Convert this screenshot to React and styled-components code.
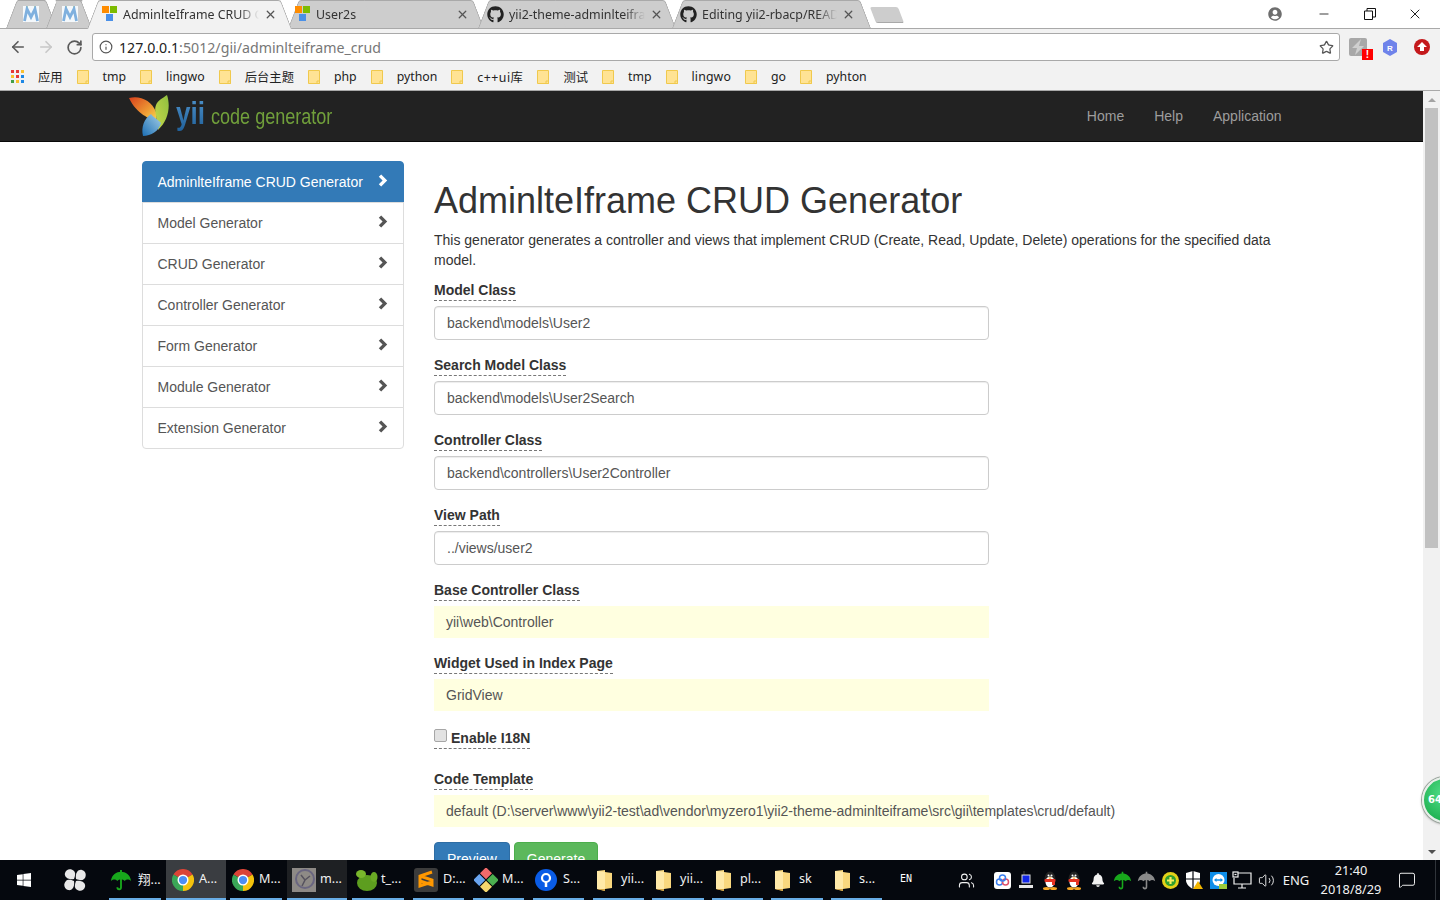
import styled, { createGlobalStyle } from 'styled-components'
import { ArrowLeft, ArrowRight, RotateCw, Info, Star, Minus, X, Users, Volume2, MessageSquare } from 'lucide-react'
import { FaGithub, FaWindows, FaUserCircle, FaBell } from 'react-icons/fa'

const Global = createGlobalStyle`
  html, body { margin: 0; height: 100%; overflow: hidden; background: #fff; }
  body { font-family: "Liberation Sans", Arial, sans-serif; font-size: 14px; color: #333; }
  * { box-sizing: border-box; }
`

const UI_FONT = '"Noto Sans", "Noto Sans CJK SC", sans-serif'

const Screen = styled.div`
  width: 1440px;
  height: 900px;
  display: flex;
  flex-direction: column;
  overflow: hidden;
`

/* browser chrome */
const TabStrip = styled.div`
  height: 29px;
  flex: none;
  display: flex;
  background: #fff;
  box-shadow: inset 0 -1px 0 #a9a9a9;
  font-family: ${UI_FONT};
  font-size: 12.4px;
`
const Tab = styled.div`
  position: relative;
  flex: none;
  width: ${p => p.$w}px;
  margin-left: ${p => p.$ml || 0}px;
  height: ${p => (p.$active ? 29 : 28)}px;
  z-index: ${p => (p.$active ? 3 : 1)};
  display: flex;
  align-items: center;
  gap: 5px;
  padding: 0 ${p => p.$pr || 16}px ${p => (p.$active ? 1 : 0)}px ${p => p.$pl || 16}px;
  color: #333;
  &::before, &::after {
    content: '';
    position: absolute;
    top: 0;
    bottom: 0;
    width: 55%;
    background: ${p => (p.$active ? '#f2f2f2' : '#cdcdcd')};
    border-top: 1px solid #a9a9a9;
    z-index: -1;
  }
  &::before {
    left: 0;
    border-left: 1px solid #a9a9a9;
    border-top-left-radius: 3px;
    transform-origin: bottom left;
    transform: skewX(-21deg);
  }
  &::after {
    right: 0;
    border-right: 1px solid #a9a9a9;
    border-top-right-radius: 3px;
    transform-origin: bottom right;
    transform: skewX(21deg);
  }
`
const TabTitle = styled.span`
  flex: 1;
  min-width: 0;
  white-space: nowrap;
  overflow: hidden;
  -webkit-mask-image: linear-gradient(to right, #000 85%, transparent 100%);
  mask-image: linear-gradient(to right, #000 85%, transparent 100%);
`
const NewTab = styled.div`
  width: 28px;
  height: 16px;
  margin: 7px 0 0 2px;
  background: #cdcdcd;
  border-bottom: 1px solid #a9a9a9;
  border-radius: 2px;
  transform: skewX(21deg);
`
const WindowControls = styled.div`
  margin-left: auto;
  display: flex;
  align-items: center;
  height: 28px;
  padding-right: 2px;
  color: #111;
`
const ProfileIcon = styled.span`
  display: flex;
  color: #6e6e6e;
  margin-right: 20px;
`
const WinBtn = styled.span`
  width: 45.5px;
  display: flex;
  justify-content: center;
`
const Toolbar = styled.div`
  height: 33px;
  flex: none;
  display: flex;
  align-items: flex-start;
  background: #f2f2f2;
  padding: 4px 0 0 4px;
`
const NavBtn = styled.span`
  width: 28px;
  height: 28px;
  display: flex;
  align-items: center;
  justify-content: center;
  color: ${p => (p.$off ? '#c8c8c8' : '#5a5a5a')};
`
const AddressBar = styled.div`
  width: 1248px;
  height: 28px;
  margin-left: 4px;
  background: #fff;
  border: 1px solid #a9a9a9;
  border-radius: 3px;
  display: flex;
  align-items: center;
  padding: 0 5px 0 6px;
  font-family: ${UI_FONT};
  font-size: 14.2px;
  color: #777;
  gap: 6px;
`
const Host = styled.span`
  color: #222;
`
const UrlText = styled.span`
  flex: 1;
`
const ExtIcons = styled.div`
  display: flex;
  align-items: center;
  height: 28px;
  padding-left: 8px;
  gap: 12px;
`
const ExtSlot = styled.span`
  position: relative;
  width: 20px;
  height: 20px;
  display: flex;
  align-items: center;
  justify-content: center;
`
const Alert = styled.span`
  position: absolute;
  right: -5px;
  bottom: -3px;
  width: 11px;
  height: 11px;
  background: #f00;
  color: #fff;
  font: bold 10px/11px "Liberation Sans", sans-serif;
  text-align: center;
`
const Bookmarks = styled.div`
  height: 29px;
  flex: none;
  display: flex;
  align-items: center;
  gap: 14px;
  padding: 1px 0 0 11px;
  background: #f2f2f2;
  border-bottom: 1px solid #a9a9a9;
  font-family: ${UI_FONT};
  font-size: 12.3px;
  color: #222;
`
const BookLabel = styled.span`
  letter-spacing: ${p => p.$spacing || 0}px;
`

/* page */
const Viewport = styled.div`
  position: relative;
  flex: 1;
  min-height: 0;
  display: flex;
`
const Page = styled.div`
  flex: 1;
  min-width: 0;
  overflow: hidden;
`
const Navbar = styled.nav`
  height: 51px;
  background: #222;
  border-bottom: 1px solid #080808;
`
const NavInner = styled.div`
  width: 1170px;
  height: 50px;
  margin: 0 auto;
  padding: 0 15px 0 2px;
  display: flex;
  align-items: center;
  justify-content: space-between;
`
const Brand = styled.div`
  display: flex;
  align-items: center;
  gap: 7px;
`
const BrandText = styled.div`
  display: flex;
  align-items: baseline;
  font-family: "Liberation Sans", sans-serif;
  margin-top: -5px;
`
const Yii = styled.span`
  display: inline-block;
  width: 35px;
  font-size: 31px;
  line-height: 36px;
  font-weight: 700;
  transform: scaleX(0.84);
  transform-origin: left center;
  background: linear-gradient(#4f94cd, #1f5f99);
  -webkit-background-clip: text;
  background-clip: text;
  color: transparent;
`
const CodeGen = styled.span`
  display: inline-block;
  width: 121px;
  white-space: nowrap;
  font-size: 22px;
  transform: scaleX(0.82);
  transform-origin: left center;
  color: #71a03b;
`
const NavLinks = styled.div`
  display: flex;
  gap: 30px;
  color: #9d9d9d;
`
const Container = styled.div`
  width: 1170px;
  margin: 0 auto;
  padding: 19px 15px 0;
  display: flex;
  gap: 30px;
  align-items: flex-start;
`
const SideList = styled.div`
  width: 262.5px;
  flex: none;
`
const SideItem = styled.div`
  height: 42px;
  margin-bottom: -1px;
  padding: 0 15px;
  display: flex;
  align-items: center;
  justify-content: space-between;
  background: ${p => (p.$active ? '#337ab7' : '#fff')};
  border: 1px solid ${p => (p.$active ? '#337ab7' : '#ddd')};
  color: ${p => (p.$active ? '#fff' : '#555')};
  position: relative;
  &:first-child { border-radius: 4px 4px 0 0; }
  &:last-child { border-radius: 0 0 4px 4px; }
  svg { margin-top: -3px; }
`
const Main = styled.div`
  flex: 1;
  min-width: 0;
`
const Title = styled.h1`
  margin: 20px 0 9px;
  font-size: 36px;
  line-height: 39.6px;
  font-weight: 500;
  color: #333;
`
const Lead = styled.p`
  margin: 0 0 10px;
  line-height: 20px;
`
const Form = styled.div`
  width: 555px;
`
const Group = styled.div`
  margin-bottom: 15px;
`
const FieldLabel = styled.label`
  display: block;
  width: fit-content;
  margin-bottom: 5px;
  font-weight: 700;
  line-height: 20px;
  border-bottom: 1px dashed #777;
  color: #333;
`
const TextInput = styled.div`
  height: 34px;
  padding: 0 12px;
  display: flex;
  align-items: center;
  background: #fff;
  border: 1px solid #ccc;
  border-radius: 4px;
  box-shadow: inset 0 1px 1px rgba(0, 0, 0, 0.075);
  color: #555;
`
const Sticky = styled.div`
  height: 32px;
  padding: 0 12px;
  display: flex;
  align-items: center;
  background: #ffffe0;
  color: #555;
  white-space: nowrap;
`
const CheckGroup = styled.div`
  padding: 2px 0 5px;
  margin-bottom: 15px;
`
const CheckLabel = styled(FieldLabel)`
  display: flex;
  align-items: center;
  gap: 4px;
  margin-bottom: 0;
`
const Check = styled.input`
  appearance: none;
  width: 13px;
  height: 13px;
  margin: -5px 0 0;
  background: #e2e2e2;
  border: 1px solid #a6a6a6;
  border-radius: 2px;
`
const Buttons = styled.div`
  display: flex;
  gap: 4px;
`
const Btn = styled.button`
  height: 34px;
  padding: 6px 12px;
  font: 14px/20px "Liberation Sans", Arial, sans-serif;
  color: #fff;
  background: ${p => (p.$green ? '#5cb85c' : '#337ab7')};
  border: 1px solid ${p => (p.$green ? '#4cae4c' : '#2e6da4')};
  border-radius: 4px;
`

/* scrollbar + floating ball */
const Scrollbar = styled.div`
  width: 17px;
  flex: none;
  display: flex;
  flex-direction: column;
  align-items: center;
  background: #f1f1f1;
`
const ScrollArrow = styled.div`
  height: 17px;
  flex: none;
  display: flex;
  align-items: center;
  justify-content: center;
  &::before {
    content: '';
    border-left: 4px solid transparent;
    border-right: 4px solid transparent;
    ${p => (p.$down ? 'border-top: 4px solid #505050;' : 'border-bottom: 4px solid #a3a3a3;')}
  }
`
const ScrollThumb = styled.div`
  width: 13px;
  height: 440px;
  background: #c1c1c1;
`
const ScrollGap = styled.div`
  flex: 1;
`
const SpeedBall = styled.div`
  position: absolute;
  left: 1422px;
  top: 686px;
  width: 46px;
  height: 46px;
  border-radius: 50%;
  background: radial-gradient(circle at 50% 35%, #55e08a, #22b455 75%);
  border: 2px solid #e7efe9;
  box-shadow: 0 0 0 1px #9aa59d, 0 1px 3px rgba(0, 0, 0, 0.4);
  color: #fff;
  font: bold 10px/42px "DejaVu Sans", sans-serif;
  padding-left: 4px;
`

/* taskbar */
const Taskbar = styled.div`
  height: 40px;
  flex: none;
  display: flex;
  align-items: stretch;
  background: #05080e;
  color: #f2f2f2;
  font-family: ${UI_FONT};
  font-size: 12.6px;
`
const TaskSlot = styled.div`
  width: 48px;
  padding-left: ${p => p.$shift || 0}px;
  margin-right: ${p => p.$mr || 0}px;
  display: flex;
  align-items: center;
  justify-content: center;
`
const TaskItem = styled.div`
  position: relative;
  flex: none;
  width: ${p => p.$w}px;
  margin-left: ${p => p.$ml}px;
  padding-left: ${p => p.$pl}px;
  display: flex;
  align-items: center;
  gap: ${p => p.$gap}px;
  white-space: nowrap;
  background: ${p => p.$bg || 'transparent'};
  &::after {
    content: '';
    position: absolute;
    left: 0;
    right: 0;
    bottom: 0;
    height: 2px;
    background: #68ade6;
  }
`
const TaskText = styled.span`
  margin-top: -3px;
`
const ImeLabel = styled.div`
  margin-left: 18px;
  display: flex;
  align-items: center;
  padding-bottom: 3px;
  font: 10px "DejaVu Sans Mono", monospace;
  color: #fff;
`
const Tray = styled.div`
  margin-left: auto;
  display: flex;
  align-items: center;
`
const TrayIcon = styled.span`
  width: 24px;
  display: flex;
  justify-content: center;
  margin-right: ${p => p.$mr || 0}px;
  color: #f2f2f2;
`
const Ime = styled.span`
  width: 36px;
  text-align: center;
  font-size: 13px;
`
const Clock = styled.div`
  width: 74px;
  text-align: center;
  line-height: 19px;
  font-size: 12.8px;
`
const NotifyBtn = styled.span`
  width: 38px;
  display: flex;
  justify-content: center;
`
const ShowDesktop = styled.span`
  align-self: stretch;
  width: 1px;
  margin: 0 4px 0 9px;
  background: #30343a;
`

/* drawn icons */
const MFav = () => (
  <svg width="16" height="16" viewBox="0 0 16 16" style={{ flex: 'none' }}>
    <rect width="16" height="16" fill="#f4f8fb" />
    <path d="M4 0v3M12 0v3" stroke="#9cc88a" strokeWidth="1.5" />
    <path d="M1.500 15 4 3l4 8 4-8 2.500 12" fill="none" stroke="#7fb0de" strokeWidth="2.800" />
  </svg>
)
const WinFav = () => (
  <svg width="16" height="16" viewBox="0 0 16 16" style={{ flex: 'none' }}>
    <rect width="7" height="7" fill="#ff8c00" />
    <rect x="8" width="7" height="7" fill="#7cbb00" />
    <rect y="8" x="4" width="7" height="7" fill="#4a90e8" />
  </svg>
)
const AppsGrid = () => (
  <svg width="13" height="13" viewBox="0 0 13 13">
    {['#e53935', '#e53935', '#fbc02d', '#fbc02d', '#e53935', '#1e88e5', '#43a047', '#fbc02d', '#1e88e5'].map((c, i) => (
      <rect key={i} x={(i % 3) * 5} y={Math.floor(i / 3) * 5} width="3" height="3" fill={c} />
    ))}
  </svg>
)
const BookFolder = () => (
  <svg width="12" height="14" viewBox="0 0 12 14">
    <path d="M.5.5h11v13H.5z" fill="#ffe394" stroke="#f0c94d" />
    <path d="M9 11h2.500v2.500H9z" fill="#ffe394" stroke="#f0c94d" />
  </svg>
)
const Chrome = ({ size = 22 }) => (
  <svg width={size} height={size} viewBox="0 0 24 24" style={{ flex: 'none' }}>
    <path d="M12 12 1.600 6A12 12 0 0 1 22.400 6Z" fill="#db4437" />
    <path d="M12 12 22.400 6A12 12 0 0 1 12 24Z" fill="#f4c20d" />
    <path d="M12 12V24A12 12 0 0 1 1.600 6Z" fill="#3aa757" />
    <circle cx="12" cy="12" r="6" fill="#fff" />
    <circle cx="12" cy="12" r="4.500" fill="#4d8ef5" />
  </svg>
)
const Umbrella = ({ color = '#18a81c', size = 22 }) => (
  <svg width={size} height={size} viewBox="0 0 24 24" style={{ flex: 'none' }}>
    <path d="M1 13C2 6 7 3 12 3s10 3 11 10c-3-2-5-2-7 0-2-2-6-2-8 0-2-2-4-2-7 0Z" fill={color} />
    <path d="M12 1v19c0 3-4 3-4 0" fill="none" stroke={color} strokeWidth="2" />
  </svg>
)
const Fan = () => (
  <svg width="22" height="22" viewBox="0 0 22 22">
    <g fill="#e8e8e8">
      <path d="M10 10C4 11 0 8 1 4s6-5 9-2c2 2 1 5 0 8Z" />
      <path d="M12 10c-1-6 2-10 6-9s5 6 2 9c-2 2-5 1-8 0Z" />
      <path d="M12 12c6-1 10 2 9 6s-6 5-9 2c-2-2-1-5 0-8Z" />
      <path d="M10 12c1 6-2 10-6 9s-5-6-2-9c2-2 5-1 8 0Z" />
    </g>
  </svg>
)
const Leaf = () => (
  <svg width="24" height="24" viewBox="0 0 24 24" style={{ flex: 'none' }}>
    <ellipse cx="13" cy="15" rx="10" ry="8" fill="#5d9e1f" />
    <ellipse cx="7" cy="6" rx="5" ry="4" fill="#79b72c" />
    <ellipse cx="20" cy="9" rx="3.500" ry="5" fill="#6aa924" />
  </svg>
)
const StoneThumb = () => (
  <svg width="24" height="24" viewBox="0 0 24 24" style={{ flex: 'none' }}>
    <rect width="24" height="24" fill="#8e8a86" />
    <circle cx="13" cy="11" r="9" fill="none" stroke="#6a6680" strokeWidth="2" />
    <path d="M9 7l4 5-3 6M13 12l5-4" fill="none" stroke="#56525e" strokeWidth="1.500" />
  </svg>
)
const Sublime = () => (
  <svg width="24" height="24" viewBox="0 0 24 24" style={{ flex: 'none' }}>
    <rect width="24" height="24" rx="3" fill="#3c3c3c" />
    <path d="M18 4 6 8v5l12 4v-5L6 8M6 13v5l12-4" fill="none" stroke="#ff9800" strokeWidth="3" />
  </svg>
)
const Diamond = () => (
  <svg width="24" height="24" viewBox="0 0 24 24" style={{ flex: 'none' }}>
    <g transform="rotate(45 12 12)">
      <rect x="3" y="3" width="8.500" height="8.500" fill="#f06a6a" />
      <rect x="12.500" y="3" width="8.500" height="8.500" fill="#4caf50" />
      <rect x="3" y="12.500" width="8.500" height="8.500" fill="#6aa5f0" />
      <rect x="12.500" y="12.500" width="8.500" height="8.500" fill="#f5d76e" />
    </g>
  </svg>
)
const SourceTree = () => (
  <svg width="22" height="22" viewBox="0 0 22 22" style={{ flex: 'none' }}>
    <circle cx="11" cy="11" r="11" fill="#0a5ce6" />
    <circle cx="11" cy="9" r="4" fill="none" stroke="#fff" strokeWidth="2.200" />
    <path d="M11 12v6" stroke="#fff" strokeWidth="2.500" />
  </svg>
)
const TaskFolder = () => (
  <svg width="15" height="21" viewBox="0 0 15 21" style={{ flex: 'none' }}>
    <path d="M0 1 8 0v2l7 1v15l-7 1v2l-8-2Z" fill="#f9d77e" />
    <path d="M8 2v17L0 19V1Z" fill="#ffe9a8" />
    <path d="M0 19l8 2v-2Z" fill="#d0a040" />
  </svg>
)
const BaiduCloud = () => (
  <svg width="17" height="17" viewBox="0 0 17 17">
    <rect width="17" height="17" rx="3" fill="#fff" />
    <circle cx="5.500" cy="10" r="3" fill="none" stroke="#3b7ff0" strokeWidth="1.500" />
    <circle cx="11.500" cy="10" r="3" fill="none" stroke="#e0506a" strokeWidth="1.500" />
    <circle cx="8.500" cy="6" r="3" fill="none" stroke="#3b7ff0" strokeWidth="1.500" />
  </svg>
)
const PcAgent = () => (
  <svg width="16" height="18" viewBox="0 0 16 18">
    <rect x="5" y="0" width="2" height="4" fill="#222" />
    <rect x="4" y="4" width="8" height="8" fill="#1226e8" stroke="#ddd" />
    <rect x="1" y="14" width="14" height="3" fill="#e8e8e8" />
  </svg>
)
const Penguin = () => (
  <svg width="16" height="19" viewBox="0 0 16 19">
    <ellipse cx="8" cy="8" rx="5.500" ry="7.500" fill="#222" />
    <ellipse cx="8" cy="11" rx="4.500" ry="5.500" fill="#fff" />
    <rect x="2.500" y="8" width="11" height="3" rx="1" fill="#e53323" />
    <path d="M10 10h3v4h-3z" fill="#e53323" />
    <ellipse cx="4.500" cy="17.500" rx="3.500" ry="1.500" fill="#f5a623" />
    <ellipse cx="11.500" cy="17.500" rx="3.500" ry="1.500" fill="#f5a623" />
    <circle cx="6.500" cy="4.500" r="1" fill="#fff" />
    <circle cx="9.500" cy="4.500" r="1" fill="#fff" />
    <path d="M6 6.500h4L8 8Z" fill="#f5a623" />
  </svg>
)
const PlusBall = () => (
  <svg width="17" height="17" viewBox="0 0 17 17">
    <circle cx="8.500" cy="8.500" r="8.500" fill="#e3d119" />
    <circle cx="8.500" cy="8.500" r="5.500" fill="#2f9e2f" />
    <path d="M8.500 5v7M5 8.500h7" stroke="#f4ee5c" strokeWidth="2.200" />
  </svg>
)
const Shield = () => (
  <svg width="18" height="18" viewBox="0 0 18 18">
    <path d="M8 0 15 2v7c0 4-3 7-7 9-4-2-7-5-7-9V2Z" fill="#fff" />
    <path d="M8 0v18M1 8h14" stroke="#05080e" strokeWidth="1.200" />
    <path d="M13 10l5 8H8Z" fill="#f2b600" />
  </svg>
)
const TeamViewer = () => (
  <svg width="17" height="17" viewBox="0 0 17 17">
    <rect width="17" height="17" fill="#0e8ee9" />
    <circle cx="8.500" cy="8" r="6" fill="#fff" />
    <path d="M4 8l2.500-2v1.200h4V6L13 8l-2.500 2V8.800h-4V10Z" fill="#0e8ee9" />
    <rect x="9" y="12" width="8" height="5" fill="#9ccc3c" />
  </svg>
)
const NetPc = () => (
  <svg width="20" height="18" viewBox="0 0 20 18" fill="none" stroke="#f2f2f2" strokeWidth="1.200">
    <path d="M5 2h14v11H2V7M10 13v4M6 17h8" />
    <rect x="1" y="1" width="5" height="5" fill="#05080e" />
    <path d="M2.500 3.500h2" />
  </svg>
)
const Hex = () => (
  <svg width="16" height="17" viewBox="0 0 16 17">
    <path d="M8 0 15 4v9l-7 4-7-4V4Z" fill="#6f83ea" />
    <text x="8" y="11.500" textAnchor="middle" fontSize="8" fontWeight="700" fontFamily="Liberation Sans" fill="#fff">R</text>
  </svg>
)
const UpCircle = () => (
  <svg width="16" height="16" viewBox="0 0 16 16">
    <circle cx="8" cy="8" r="8" fill="#c4191c" />
    <path d="M8 3l5 5h-3v4H6V8H3Z" fill="#fff" />
  </svg>
)
const Bolt = () => (
  <svg width="18" height="18" viewBox="0 0 18 18">
    <rect width="18" height="18" rx="2" fill="#a8a8a8" />
    <path d="M12 1 3 10h5l-2 7 9-9h-5Z" fill="#cfcfcf" />
  </svg>
)
const RestoreIcon = () => (
  <svg width="12" height="12" viewBox="0 0 12 12" fill="none" stroke="#111" strokeWidth="1">
    <path d="M.5 3h8v8.500h-8zM3 3V.500h8.500V9H8.500" />
  </svg>
)
const Chevron = ({ color }) => (
  <svg width="10" height="13" viewBox="0 0 10 13">
    <path d="M3.200.500 9.200 6.500 3.200 12.500 .8 10.300 4.600 6.500 .8 2.700Z" fill={color} />
  </svg>
)
const YiiMark = () => (
  <svg width="40" height="42" viewBox="0 0 40 42">
    <defs>
      <linearGradient id="wingL" x1="0" y1="0" x2="1" y2="1">
        <stop offset="0" stopColor="#d8401c" />
        <stop offset="0.6" stopColor="#ee9a34" />
        <stop offset="1" stopColor="#f7de50" />
      </linearGradient>
      <linearGradient id="wingR" x1="1" y1="0" x2="0" y2="1">
        <stop offset="0" stopColor="#8fbf3f" />
        <stop offset="1" stopColor="#c8d84a" />
      </linearGradient>
      <linearGradient id="wingB" x1="0" y1="1" x2="1" y2="0">
        <stop offset="0" stopColor="#1c6fb5" />
        <stop offset="1" stopColor="#a5cfe6" />
      </linearGradient>
    </defs>
    <path d="M0 3C10 0 23 5 27 17c1 4 1 7 0 10C21 23 8 20 0 3Z" fill="url(#wingL)" />
    <path d="M38 0c4 12 1 26-9 35 1-10-5-18-2-25 2-5 7-7 11-10Z" fill="url(#wingR)" />
    <path d="M14 41C12 32 15 24 22 19c3 4 8 6 10 9-2 8-10 13-18 13Z" fill="url(#wingB)" />
  </svg>
)

const bookmarks = [
  { name: 'tmp' },
  { name: 'lingwo' },
  { name: '后台主题' },
  { name: 'php' },
  { name: 'python' },
  { name: 'c++ui库', spacing: 0.5 },
  { name: '测试' },
  { name: 'tmp' },
  { name: 'lingwo', spacing: 0.15 },
  { name: 'go' },
  { name: 'pyhton' },
]
const generators = ['Model Generator', 'CRUD Generator', 'Controller Generator', 'Form Generator', 'Module Generator', 'Extension Generator']
const textFields = [
  ['Model Class', 'backend\\models\\User2'],
  ['Search Model Class', 'backend\\models\\User2Search'],
  ['Controller Class', 'backend\\controllers\\User2Controller'],
  ['View Path', '../views/user2'],
]
const taskItems = [
  { w: 52, ml: 0, pl: 1, gap: 6, icon: <Umbrella />, text: '翔...' },
  { w: 60, ml: 5, pl: 6, gap: 5, icon: <Chrome />, text: 'A...', bg: '#3a3d41' },
  { w: 52, ml: 4, pl: 2, gap: 5, icon: <Chrome />, text: 'M...' },
  { w: 60, ml: 5, pl: 5, gap: 4, icon: <StoneThumb />, text: 'm...', bg: '#1e2023' },
  { w: 52, ml: 5, pl: 2, gap: 3, icon: <Leaf />, text: 't_...' },
  { w: 51, ml: 9, pl: 1, gap: 5, icon: <Sublime />, text: 'D:...' },
  { w: 51, ml: 9, pl: 1, gap: 4, icon: <Diamond />, text: 'M...' },
  { w: 51, ml: 9, pl: 2, gap: 6, icon: <SourceTree />, text: 'S...' },
  { w: 51, ml: 9, pl: 4, gap: 9, icon: <TaskFolder />, text: 'yii...' },
  { w: 52, ml: 8, pl: 4, gap: 9, icon: <TaskFolder />, text: 'yii...' },
  { w: 51, ml: 8, pl: 4, gap: 9, icon: <TaskFolder />, text: 'pl...' },
  { w: 52, ml: 8, pl: 4, gap: 9, icon: <TaskFolder />, text: 'sk' },
  { w: 51, ml: 8, pl: 4, gap: 9, icon: <TaskFolder />, text: 's...' },
]

export default function App() {
  return (
    <Screen>
      <Global />
      <TabStrip>
        <Tab $w={51} $ml={6} $pl={17} $pr={10}><MFav /></Tab>
        <Tab $w={46} $ml={-11} $pl={16} $pr={8}><MFav /></Tab>
        <Tab $w={205} $ml={-5} $active $pl={15} $pr={15}>
          <WinFav />
          <TabTitle>AdminlteIframe CRUD Generator</TabTitle>
          <X size={13} color="#555" strokeWidth={2.4} />
        </Tab>
        <Tab $w={196} $ml={-4} $pl={7} $pr={15}>
          <WinFav />
          <TabTitle>User2s</TabTitle>
          <X size={13} color="#555" strokeWidth={2.4} />
        </Tab>
        <Tab $w={198} $ml={-6} $pl={9} $pr={13}>
          <FaGithub size={17} color="#222" style={{ flex: 'none' }} />
          <TabTitle>yii2-theme-adminlteiframe</TabTitle>
          <X size={13} color="#555" strokeWidth={2.4} />
        </Tab>
        <Tab $w={199} $ml={-4} $pl={8} $pr={16}>
          <FaGithub size={17} color="#222" style={{ flex: 'none' }} />
          <TabTitle>Editing yii2-rbacp/README</TabTitle>
          <X size={13} color="#555" strokeWidth={2.4} />
        </Tab>
        <NewTab />
        <WindowControls>
          <ProfileIcon><FaUserCircle size={14} /></ProfileIcon>
          <WinBtn><Minus size={14} strokeWidth={1.4} /></WinBtn>
          <WinBtn><RestoreIcon /></WinBtn>
          <WinBtn><X size={16} strokeWidth={1.4} /></WinBtn>
        </WindowControls>
      </TabStrip>

      <Toolbar>
        <NavBtn><ArrowLeft size={18} strokeWidth={2.2} /></NavBtn>
        <NavBtn $off><ArrowRight size={18} strokeWidth={2.2} /></NavBtn>
        <NavBtn><RotateCw size={17} strokeWidth={2.4} /></NavBtn>
        <AddressBar>
          <Info size={14} color="#555" strokeWidth={2} />
          <UrlText><Host>127.0.0.1</Host>:5012/gii/adminlteiframe_crud</UrlText>
          <Star size={15} color="#555" strokeWidth={2} />
        </AddressBar>
        <ExtIcons>
          <ExtSlot><Bolt /><Alert>!</Alert></ExtSlot>
          <ExtSlot><Hex /></ExtSlot>
          <ExtSlot><UpCircle /></ExtSlot>
        </ExtIcons>
      </Toolbar>

      <Bookmarks>
        <AppsGrid />
        <span>应用</span>
        {bookmarks.map((b, i) => [
          <BookFolder key={'f' + i} />,
          <BookLabel key={i} $spacing={b.spacing}>{b.name}</BookLabel>,
        ])}
      </Bookmarks>

      <Viewport>
        <Page>
          <Navbar>
            <NavInner>
              <Brand>
                <YiiMark />
                <BrandText><Yii>yii</Yii><CodeGen>code generator</CodeGen></BrandText>
              </Brand>
              <NavLinks><span>Home</span><span>Help</span><span>Application</span></NavLinks>
            </NavInner>
          </Navbar>
          <Container>
            <SideList>
              <SideItem $active>AdminlteIframe CRUD Generator<Chevron color="#fff" /></SideItem>
              {generators.map(g => (
                <SideItem key={g}>{g}<Chevron color="#555" /></SideItem>
              ))}
            </SideList>
            <Main>
              <Title>AdminlteIframe CRUD Generator</Title>
              <Lead>This generator generates a controller and views that implement CRUD (Create, Read, Update, Delete) operations for the specified data model.</Lead>
              <Form>
                {textFields.map(([label, value]) => (
                  <Group key={label}>
                    <FieldLabel>{label}</FieldLabel>
                    <TextInput>{value}</TextInput>
                  </Group>
                ))}
                <Group>
                  <FieldLabel>Base Controller Class</FieldLabel>
                  <Sticky>yii\web\Controller</Sticky>
                </Group>
                <Group>
                  <FieldLabel>Widget Used in Index Page</FieldLabel>
                  <Sticky>GridView</Sticky>
                </Group>
                <CheckGroup>
                  <CheckLabel><Check type="checkbox" readOnly />Enable I18N</CheckLabel>
                </CheckGroup>
                <Group>
                  <FieldLabel>Code Template</FieldLabel>
                  <Sticky>default (D:\server\www\yii2-test\ad\vendor\myzero1\yii2-theme-adminlteiframe\src\gii\templates\crud/default)</Sticky>
                </Group>
                <Buttons>
                  <Btn>Preview</Btn>
                  <Btn $green>Generate</Btn>
                </Buttons>
              </Form>
            </Main>
          </Container>
        </Page>
        <Scrollbar>
          <ScrollArrow />
          <ScrollThumb />
          <ScrollGap />
          <ScrollArrow $down />
        </Scrollbar>
        <SpeedBall>64</SpeedBall>
      </Viewport>

      <Taskbar>
        <TaskSlot><FaWindows size={16} color="#fff" /></TaskSlot>
        <TaskSlot $mr={13} $shift={5}><Fan /></TaskSlot>
        {taskItems.map((t, i) => (
          <TaskItem key={i} $w={t.w} $ml={t.ml} $pl={t.pl} $gap={t.gap} $bg={t.bg}>
            {t.icon}
            <TaskText>{t.text}</TaskText>
          </TaskItem>
        ))}
        <ImeLabel>EN</ImeLabel>
        <Tray>
          <TrayIcon $mr={12}><Users size={17} strokeWidth={1.5} /></TrayIcon>
          <TrayIcon><BaiduCloud /></TrayIcon>
          <TrayIcon><PcAgent /></TrayIcon>
          <TrayIcon><Penguin /></TrayIcon>
          <TrayIcon><Penguin /></TrayIcon>
          <TrayIcon><FaBell size={14} /></TrayIcon>
          <TrayIcon><Umbrella size={19} /></TrayIcon>
          <TrayIcon><Umbrella size={19} color="#8a8a8a" /></TrayIcon>
          <TrayIcon><PlusBall /></TrayIcon>
          <TrayIcon><Shield /></TrayIcon>
          <TrayIcon><TeamViewer /></TrayIcon>
          <TrayIcon><NetPc /></TrayIcon>
          <TrayIcon><Volume2 size={17} strokeWidth={1.3} /></TrayIcon>
          <Ime>ENG</Ime>
          <Clock>21:40<br />2018/8/29</Clock>
          <NotifyBtn><MessageSquare size={18} strokeWidth={1.3} /></NotifyBtn>
          <ShowDesktop />
        </Tray>
      </Taskbar>
    </Screen>
  )
}
